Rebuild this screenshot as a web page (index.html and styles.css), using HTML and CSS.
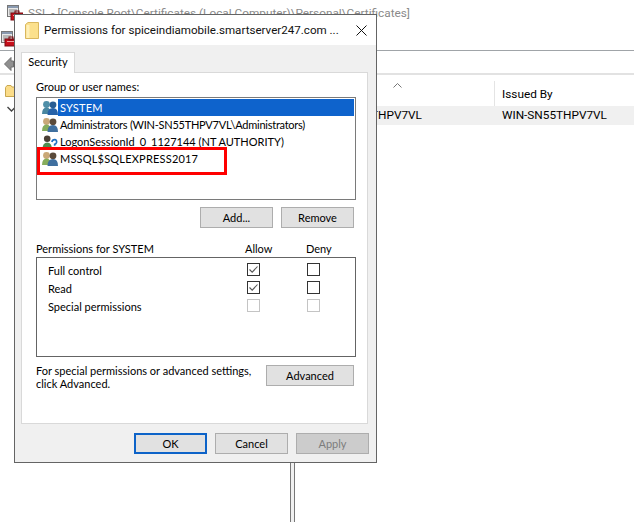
FILE: index.html
```html
<!DOCTYPE html>
<html lang="en">
<head>
<meta charset="utf-8">
<title>Permissions</title>
<link rel="stylesheet" href="styles.css">
</head>
<body>
<svg class="defs" width="0" height="0" aria-hidden="true">
  <symbol id="console" viewBox="0 0 16 16">
    <rect x="0.5" y="0.5" width="11" height="11" fill="#e8e8e8" stroke="#777"/>
    <rect x="1" y="1" width="10" height="2" fill="#8a9ab0"/>
    <path d="M2 5h8M2 7h8M2 9h5" stroke="#888"/>
    <rect x="4" y="8" width="12" height="7" fill="#c8101c" stroke="#7a0a10"/>
    <rect x="8" y="6" width="4" height="3" fill="none" stroke="#7a0a10"/>
    <rect x="6" y="10" width="8" height="1" fill="#f2a0a0"/>
  </symbol>
  <symbol id="folder" viewBox="0 0 14 17">
    <path d="M0.5 2.5 L3 0.5 H13.5 V16.5 H0.5 Z" fill="#fbe08c" stroke="#d9b75e"/>
    <rect x="1.5" y="3" width="3" height="13" fill="#fff0b8"/>
  </symbol>
  <symbol id="users-blue" viewBox="0 0 16 14">
    <circle cx="4.5" cy="3.5" r="3.4" fill="#4f8fa8"/>
    <path d="M0 13 Q0 6.500 4.500 6.500 Q9 6.500 9 13 Z" fill="#4a87a0"/>
    <circle cx="11" cy="3.800" r="3.400" fill="#2a5d93"/>
    <path d="M5.500 14 Q5.500 7 11 7 Q16 7 16 14 Z" fill="#2762a8"/>
  </symbol>
  <symbol id="users" viewBox="0 0 16 14">
    <circle cx="4.5" cy="3.5" r="3.4" fill="#c9a878"/>
    <path d="M0 13 Q0 6.500 4.500 6.500 Q9 6.500 9 13 Z" fill="#86ad5c"/>
    <circle cx="11" cy="3.800" r="3.400" fill="#5a4a3a"/>
    <path d="M5.500 14 Q5.500 7 11 7 Q16 7 16 14 Z" fill="#3f6f9f"/>
  </symbol>
  <symbol id="user-q" viewBox="0 0 16 15">
    <circle cx="5" cy="4" r="3.5" fill="#4a3f35"/>
    <path d="M0 15 Q0 8 5 8 Q10 8 10 15 Z" fill="#4f8c4f"/>
    <path d="M10 7.5 Q10.500 5 13 5 Q15.500 5 15 8 Q14.500 9.500 13 10 V11.500" fill="none" stroke="#1f6fc0" stroke-width="1.800"/>
    <rect x="12" y="13" width="2" height="2" fill="#1f6fc0"/>
  </symbol>
  <symbol id="check" viewBox="0 0 11 11">
    <path d="M1.500 5.500 L4.200 8.200 L9.500 2.500" fill="none" stroke="#555" stroke-width="1.100"/>
  </symbol>
</svg>

<div class="app">
  <div class="app-title">
    <svg class="ico-console"><use href="#console"/></svg>
    <span>SSL - [Console Root\Certificates (Local Computer)\Personal\Certificates]</span>
  </div>
  <div class="app-menu">
    <svg class="ico-console"><use href="#console"/></svg>
  </div>
  <div class="app-toolbar">
    <svg class="back" viewBox="0 0 10 14"><path d="M7 0.500 L0.500 7 L7 13.500 V10 H9.500 V4 H7 Z" fill="#8f8f8f" stroke="#6e6e6e"/></svg>
  </div>
  <div class="app-main">
    <div class="tree">
      <svg class="tree-folder" viewBox="0 0 11 12"><path d="M0.500 2.500 L2 0.500 H6 L7 2 H10.500 V11.500 H0.500 Z" fill="#fbdc88" stroke="#c9a850"/></svg>
      <svg class="tree-chevron" viewBox="0 0 9 6"><path d="M0.500 1 L4.500 5 L8.500 1" fill="none" stroke="#444" stroke-width="1.400"/></svg>
    </div>
    <div class="splitter"></div>
    <div class="list">
      <div class="list-head">
        <div class="col-a"><svg class="sort" viewBox="0 0 9 5"><path d="M0.500 4.500 L4.500 0.500 L8.500 4.500" fill="none" stroke="#777"/></svg></div>
        <div class="col-b">Issued By</div>
      </div>
      <div class="list-row">
        <div class="col-a">WIN-SN55THPV7VL</div>
        <div class="col-b">WIN-SN55THPV7VL</div>
      </div>
    </div>
  </div>
</div>

<div class="dialog">
  <div class="dlg-title">
    <svg class="dlg-folder"><use href="#folder"/></svg>
    <span class="dlg-title-text">Permissions for spiceindiamobile.smartserver247.com ...</span>
    <svg class="dlg-close" viewBox="0 0 11 11"><path d="M0.500 0.500 L10.500 10.500 M10.500 0.500 L0.500 10.500" stroke="#111" stroke-width="1"/></svg>
  </div>
  <div class="dlg-body">
    <div class="tabstrip"><div class="tab">Security</div></div>
    <div class="panel">
      <div class="label-group">Group or user names:</div>
      <div class="listbox">
        <div class="row"><svg class="row-ico"><use href="#users-blue"/></svg><span class="row-text selected">SYSTEM</span></div>
        <div class="row"><svg class="row-ico"><use href="#users"/></svg><span class="row-text tight">Administrators (WIN-SN55THPV7VL\Administrators)</span></div>
        <div class="row"><svg class="row-ico"><use href="#user-q"/></svg><span class="row-text">LogonSessionId_0_1127144 (NT AUTHORITY)</span></div>
        <div class="row"><svg class="row-ico"><use href="#users"/></svg><span class="row-text wide">MSSQL$SQLEXPRESS2017</span></div>
        <div class="highlight"></div>
      </div>
      <div class="btn-row">
        <button class="btn">Add...</button>
        <button class="btn">Remove</button>
      </div>
      <div class="perm-head">
        <span>Permissions for SYSTEM</span>
        <span>Allow</span>
        <span>Deny</span>
      </div>
      <div class="perm-box">
        <span>Full control</span>
        <span class="cb"><svg><use href="#check"/></svg></span>
        <span class="cb"></span>
        <span>Read</span>
        <span class="cb"><svg><use href="#check"/></svg></span>
        <span class="cb"></span>
        <span>Special permissions</span>
        <span class="cb off"></span>
        <span class="cb off"></span>
      </div>
      <div class="adv-row">
        <div class="adv-text">For special permissions or advanced settings,<br>click Advanced.</div>
        <button class="btn btn-adv">Advanced</button>
      </div>
    </div>
    <div class="dlg-foot">
      <button class="btn btn-default">OK</button>
      <button class="btn">Cancel</button>
      <button class="btn btn-disabled">Apply</button>
    </div>
  </div>
</div>
</body>
</html>
```

FILE: styles.css
```css
* { box-sizing: border-box; }
html, body { margin: 0; padding: 0; height: 100%; overflow: hidden; background: #fff; }
body { font-family: Roboto, "Open Sans", sans-serif; font-size: 11.800px; color: #000; position: relative; }
.defs { position: absolute; }
svg { display: block; flex: none; }

/* background console window */
.app { height: 522px; display: flex; flex-direction: column; }
.app-title { height: 26px; padding: 5px 0 0 7px; display: flex; gap: 5px; color: #8a8a8a; line-height: 16px; white-space: nowrap; }
.ico-console { width: 16px; height: 16px; }
.app-menu { height: 25px; padding: 5px 0 0 1px; border-bottom: 1px solid #a0a4a8; }
.app-toolbar { height: 24px; padding: 6px 0 0 4px; border-bottom: 2px solid #e2e2e2; }
.back { width: 10px; height: 14px; }
.app-main { flex: 1; display: flex; min-height: 0; padding-top: 0; }
.tree { width: 290px; padding: 10px 0 0 5px; }
.tree-folder { width: 11px; height: 12px; }
.tree-chevron { width: 9px; height: 6px; margin: 9px 0 0 2px; }
.splitter { width: 5px; border-left: 1px solid #777; border-right: 1px solid #777; background: #f0f0f0; }
.list { flex: 1; }
.list-head { display: flex; height: 31px; }
.list-head .col-a { position: relative; border-right: 1px solid #e4e4e4; margin-top: 6px; }
.list-head .col-b { padding-top: 11px; line-height: 16px; }
.col-a { width: 200px; padding-left: 22px; }
.col-b { flex: 1; padding-left: 7px; }
.sort { position: absolute; left: 98px; top: 2px; width: 9px; height: 5px; }
.list-row { display: flex; height: 19px; line-height: 19px; background: #f0f0f0; }

/* dialog */
.dialog { position: absolute; left: 14px; top: 14px; width: 363px; height: 449px; border: 1px solid #646464; background: #f0f0f0; display: flex; flex-direction: column; }
.dlg-title { height: 30px; background: #fff; display: flex; align-items: center; padding: 0 9px 0 10px; font-size: 11.600px; }
.dlg-folder { width: 14px; height: 17px; margin-right: 5px; }
.dlg-title-text { flex: 1; min-width: 0; overflow: hidden; white-space: nowrap; color: #111; }
.dlg-close { width: 11px; height: 11px; }
.dlg-body { flex: 1; padding: 7px 0 0 6px; display: flex; flex-direction: column; font-family: Lato, Roboto, sans-serif; font-size: 11px; }
.tabstrip { display: flex; height: 21px; }
.tab { width: 54px; height: 21px; background: #fff; border: 1px solid #d9d9d9; border-bottom: 0; text-align: center; line-height: 17px; position: relative; z-index: 1; }
.panel { width: 347px; height: 352px; margin-top: -1px; background: #fff; border: 1px solid #d9d9d9; padding: 6px 0 0 14px; display: flex; flex-direction: column; }
.label-group { height: 16px; line-height: 16px; }
.listbox { position: relative; width: 320px; height: 103px; margin-top: 2px; border: 1px solid #7a7a7a; padding-top: 1px; }
.row { height: 17px; display: flex; align-items: center; padding-left: 5px; white-space: nowrap; }
.row-ico { width: 16px; height: 14px; }
.row-text { padding-left: 2px; line-height: 17px; }
.tight { letter-spacing: -0.250px; }
.wide { letter-spacing: 0.200px; }
.selected { flex: 1; margin-right: 1px; background: #0e63cc; color: #fff; letter-spacing: 0.200px; }
.highlight { position: absolute; left: 0; top: 49px; width: 190px; height: 28px; border: 3px solid #f00; }

.btn { display: block; flex: none; font: inherit; color: #000; width: 73px; height: 21px; padding: 0; background: #e1e1e1; border: 1px solid #adadad; border-radius: 0; }
.btn-row { display: flex; justify-content: flex-end; gap: 8px; width: 318px; margin-top: 7px; }
.perm-head { display: grid; grid-template-columns: 209px 61px auto; height: 16px; line-height: 16px; margin-top: 13px; }
.perm-box { width: 320px; height: 100px; border: 1px solid #646464; padding: 5px 0 0 11px; display: grid; grid-template-columns: 199px 60px 13px; grid-auto-rows: 13px; row-gap: 5px; line-height: 15px; white-space: nowrap; justify-content: start; }
.cb { display: block; width: 13px; height: 13px; border: 1px solid #333; background: #fff; }
.cb svg { width: 11px; height: 11px; }
.cb.off { border-color: #c4c4c4; }
.adv-row { display: flex; width: 318px; justify-content: space-between; margin-top: 8px; }
.adv-text { line-height: 13px; white-space: nowrap; margin-top: -1px; }
.btn-adv { width: 88px; }
.dlg-foot { display: flex; justify-content: flex-end; gap: 8px; padding: 9px 7px 0 0; }
.btn-default { border: 2px solid #0d63c8; }
.btn-disabled { background: #cccccc; color: #7c7c7c; }
```
